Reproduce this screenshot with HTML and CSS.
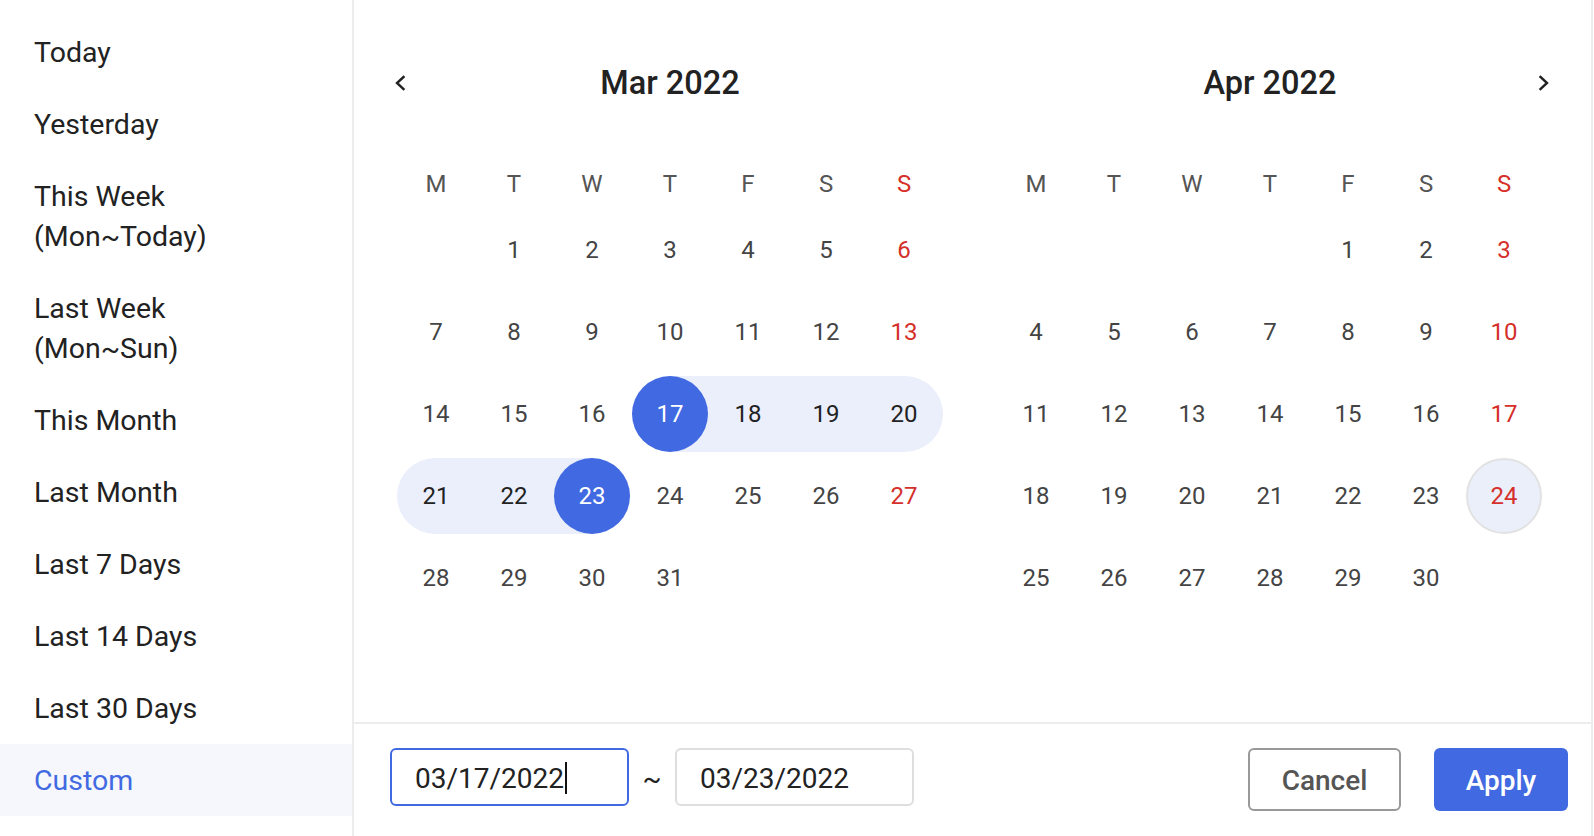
FILE: index.html
```html
<!DOCTYPE html>
<html lang="en">
<head>
<meta charset="utf-8">
<title>Date range picker</title>
<link rel="stylesheet" href="styles.css">
</head>
<body>
<div class="picker">
  <ul class="presets">
    <li class="preset">Today</li>
    <li class="preset">Yesterday</li>
    <li class="preset">This Week<br>(Mon~Today)</li>
    <li class="preset">Last Week<br>(Mon~Sun)</li>
    <li class="preset">This Month</li>
    <li class="preset">Last Month</li>
    <li class="preset">Last 7 Days</li>
    <li class="preset">Last 14 Days</li>
    <li class="preset">Last 30 Days</li>
    <li class="preset active">Custom</li>
  </ul>
  <div class="main">
    <div class="months">
      <section class="month">
        <div class="month-head">
          <svg class="nav prev" viewBox="0 0 14 20" width="14" height="20"><path d="M10.5 4 L4 10 L10.5 16" /></svg>
          <div class="title">Mar 2022</div>
        </div>
        <div class="grid">
          <div class="wd">M</div><div class="wd">T</div><div class="wd">W</div><div class="wd">T</div><div class="wd">F</div><div class="wd">S</div><div class="wd sun">S</div>
          <div class="d"></div><div class="d">1</div><div class="d">2</div><div class="d">3</div><div class="d">4</div><div class="d">5</div><div class="d sun">6</div>
          <div class="d">7</div><div class="d">8</div><div class="d">9</div><div class="d">10</div><div class="d">11</div><div class="d">12</div><div class="d sun">13</div>
          <div class="d">14</div><div class="d">15</div><div class="d">16</div><div class="d start"><span class="dot">17</span></div><div class="d in">18</div><div class="d in">19</div><div class="d in rr">20</div>
          <div class="d in rl">21</div><div class="d in">22</div><div class="d end"><span class="dot">23</span></div><div class="d">24</div><div class="d">25</div><div class="d">26</div><div class="d sun">27</div>
          <div class="d">28</div><div class="d">29</div><div class="d">30</div><div class="d">31</div>
        </div>
      </section>
      <section class="month">
        <div class="month-head">
          <div class="title">Apr 2022</div>
          <svg class="nav next" viewBox="0 0 14 20" width="14" height="20"><path d="M3.5 4 L10 10 L3.5 16" /></svg>
        </div>
        <div class="grid">
          <div class="wd">M</div><div class="wd">T</div><div class="wd">W</div><div class="wd">T</div><div class="wd">F</div><div class="wd">S</div><div class="wd sun">S</div>
          <div class="d"></div><div class="d"></div><div class="d"></div><div class="d"></div><div class="d">1</div><div class="d">2</div><div class="d sun">3</div>
          <div class="d">4</div><div class="d">5</div><div class="d">6</div><div class="d">7</div><div class="d">8</div><div class="d">9</div><div class="d sun">10</div>
          <div class="d">11</div><div class="d">12</div><div class="d">13</div><div class="d">14</div><div class="d">15</div><div class="d">16</div><div class="d sun">17</div>
          <div class="d">18</div><div class="d">19</div><div class="d">20</div><div class="d">21</div><div class="d">22</div><div class="d">23</div><div class="d sun"><span class="today">24</span></div>
          <div class="d">25</div><div class="d">26</div><div class="d">27</div><div class="d">28</div><div class="d">29</div><div class="d">30</div>
        </div>
      </section>
    </div>
    <div class="footer">
      <div class="field focused">03/17/2022<span class="caret"></span></div>
      <span class="tilde">~</span>
      <div class="field">03/23/2022</div>
      <div class="actions">
        <button class="btn cancel">Cancel</button>
        <button class="btn apply">Apply</button>
      </div>
    </div>
  </div>
</div>
</body>
</html>
```
FILE: styles.css
```css
* { box-sizing: border-box; }

body {
  margin: 0;
  background: #fff;
  font-family: Roboto, "Noto Sans", "Liberation Sans", sans-serif;
  color: #222;
}

.picker {
  display: flex;
  width: 1593px;
  height: 836px;
  border-right: 2px solid #ececec;
}

.presets {
  list-style: none;
  margin: 0;
  padding: 16px 0 0 0;
  width: 354px;
  flex: none;
  border-right: 2px solid #ececec;
}

.preset {
  padding: 17px 0 15px 34px;
  font-size: 28.5px;
  line-height: 40px;
  color: #222;
}

.preset.active {
  background: #f5f7fc;
  color: #4169e1;
}

.main {
  flex: 1;
  display: flex;
  flex-direction: column;
  min-width: 0;
}

.months {
  height: 722px;
  flex: none;
  display: flex;
  gap: 54px;
  padding: 63px 0 0 43px;
}

.month {
  width: 546px;
}

.month-head {
  display: grid;
  grid-template-columns: 14px 1fr 14px;
  align-items: center;
  height: 40px;
}

.title {
  grid-column: 2;
  grid-row: 1;
  text-align: center;
  font-size: 32.5px;
  font-weight: 500;
  line-height: 40px;
  color: #222;
}

.nav {
  grid-row: 1;
  fill: none;
  stroke: #222;
  stroke-width: 2.4;
  stroke-linecap: square;
}

.nav.prev {
  grid-column: 1;
  margin-left: -4px;
}

.nav.next {
  grid-column: 3;
  margin-left: 8px;
}

.grid {
  display: grid;
  grid-template-columns: repeat(7, 78px);
  grid-template-rows: 44px;
  grid-auto-rows: 76px;
  row-gap: 6px;
  margin-top: 59px;
}

.wd {
  display: flex;
  align-items: center;
  justify-content: center;
  font-size: 24px;
  color: #555;
}

.d {
  display: flex;
  align-items: center;
  justify-content: center;
  font-size: 24px;
  color: #444;
}

.sun {
  color: #d5302a;
}

.d.in {
  background: #ebeffb;
  color: #222;
}

.d.rl {
  border-radius: 38px 0 0 38px;
}

.d.rr {
  border-radius: 0 38px 38px 0;
}

.d.start {
  background: linear-gradient(to right, transparent 50%, #ebeffb 50%);
}

.d.end {
  background: linear-gradient(to left, transparent 50%, #ebeffb 50%);
}

.dot {
  width: 76px;
  height: 76px;
  border-radius: 50%;
  background: #4169e1;
  color: #fff;
  display: flex;
  align-items: center;
  justify-content: center;
}

.today {
  width: 76px;
  height: 76px;
  border-radius: 50%;
  background: #ebeffa;
  border: 2px solid #e2e2e2;
  display: flex;
  align-items: center;
  justify-content: center;
}

.footer {
  flex: 1;
  border-top: 2px solid #ececec;
  display: flex;
  align-items: flex-start;
  padding: 24px 23px 0 36px;
}

.field {
  width: 239px;
  height: 58px;
  border: 2px solid #dedede;
  border-radius: 6px;
  padding: 2px 0 0 23px;
  display: flex;
  align-items: center;
  font-size: 28px;
  color: #222;
}

.field.focused {
  border-color: #4169e1;
}

.caret {
  display: inline-block;
  width: 2px;
  height: 32px;
  background: #111;
  margin-left: 1px;
}

.tilde {
  width: 46px;
  height: 58px;
  padding-top: 2px;
  display: flex;
  align-items: center;
  justify-content: center;
  font-size: 28px;
  color: #222;
}

.actions {
  margin-left: auto;
  display: flex;
  gap: 33px;
}

.btn {
  height: 63px;
  border-radius: 6px;
  padding-top: 2px;
  font-family: Roboto, "Noto Sans", "Liberation Sans", sans-serif;
  font-size: 28px;
  font-weight: 500;
  cursor: pointer;
}

.cancel {
  width: 153px;
  border: 2px solid #999;
  background: #fff;
  color: #555;
}

.apply {
  width: 134px;
  border: none;
  background: #4169e1;
  color: #fff;
}
```
